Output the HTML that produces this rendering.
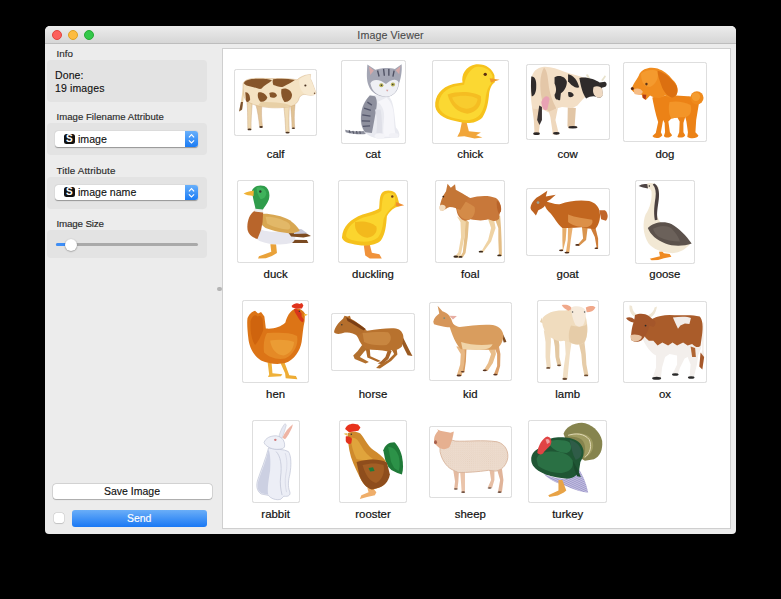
<!DOCTYPE html>
<html><head><meta charset="utf-8">
<style>
*{margin:0;padding:0;box-sizing:border-box}
html,body{width:781px;height:599px;background:#000;overflow:hidden;font-family:"Liberation Sans",sans-serif}
.abs{position:absolute}
#win{position:absolute;left:45px;top:26px;width:691px;height:508.3px;background:#ececec;border-radius:5px 5px 4px 4px;overflow:hidden}
#tb{position:absolute;left:0;top:0;width:691px;height:18px;background:linear-gradient(#ececec,#d6d6d6);border-bottom:1px solid #bdbdbd}
.dot{position:absolute;top:3.6px;width:10.5px;height:10.5px;border-radius:50%}
#title{position:absolute;left:0;top:3px;width:691px;text-align:center;font-size:10.7px;letter-spacing:0.1px;color:#4a4a4a;-webkit-text-stroke:0.1px #4a4a4a}
.lbl{position:absolute;font-size:9.8px;letter-spacing:0.05px;-webkit-text-stroke:0.15px #2a2a2a;color:#2a2a2a;white-space:nowrap}
.box{position:absolute;left:2px;width:159.5px;background:#e3e3e3;border-radius:4px}
.combo{position:absolute;left:8px;width:143px;height:15.5px;background:#fff;border-radius:3px;box-shadow:0 0.5px 1px rgba(0,0,0,.35)}
.combo .ic{position:absolute;left:9px;top:2.5px;width:10.5px;height:10px;background:#111;border-radius:2.5px;color:#fff;font-size:10px;font-weight:bold;text-align:center;line-height:10px}
.combo .tx{position:absolute;left:23px;top:1.5px;font-size:10.6px;color:#111;white-space:nowrap;-webkit-text-stroke:0.12px #111}
.combo .ar{position:absolute;right:0;top:0;width:13px;height:15.5px;background:linear-gradient(#68b0fb,#1b7cf5);border-radius:0 3px 3px 0}
#panel{position:absolute;left:177px;top:22px;width:509px;height:481px;background:#fff;border:1px solid #cfcfcf}
.cell{position:absolute}
.fr{position:absolute;background:#fff;border:1.6px solid #dedede;border-radius:2.5px;box-shadow:0 0 0.6px rgba(0,0,0,.12)}
.an{position:absolute;overflow:visible}
.cap{position:absolute;width:96px;text-align:center;font-size:11.4px;color:#111;-webkit-text-stroke:0.2px #111}
</style></head><body>
<div id="win">
  <div id="tb">
    <div class="dot" style="left:6.5px;background:#fc605c;border:0.5px solid #e0443e"></div>
    <div class="dot" style="left:22.5px;background:#fdbc40;border:0.5px solid #dea123"></div>
    <div class="dot" style="left:38.5px;background:#34c84a;border:0.5px solid #27aa35"></div>
    <div id="title">Image Viewer</div>
  </div>
  <!-- sidebar -->
  <div class="lbl" style="left:11.5px;top:21.5px">Info</div>
  <div class="box" style="top:34px;height:42px">
    <div class="abs" style="left:8px;top:9px;font-size:10.5px;line-height:13px;color:#111;letter-spacing:0.12px;-webkit-text-stroke:0.12px #111">Done:<br>19 images</div>
  </div>
  <div class="lbl" style="left:11.5px;top:85px;font-size:9.55px">Image Filename Attribute</div>
  <div class="box" style="top:97px;height:32px">
    <div class="combo" style="top:8px"><div class="ic">S</div><div class="tx">image</div><div class="ar"><svg width="13" height="15.5" viewBox="0 0 13 15.5" style="position:absolute;left:0;top:0"><path d="M3.9 6.3 L6.5 3.6 L9.1 6.3 M3.9 9.3 L6.5 12 L9.1 9.3" fill="none" stroke="#fff" stroke-width="1.1"/></svg></div></div>
  </div>
  <div class="lbl" style="left:11.5px;top:138.5px;letter-spacing:0.15px">Title Attribute</div>
  <div class="box" style="top:150.5px;height:32px">
    <div class="combo" style="top:8px"><div class="ic">S</div><div class="tx">image name</div><div class="ar"><svg width="13" height="15.5" viewBox="0 0 13 15.5" style="position:absolute;left:0;top:0"><path d="M3.9 6.3 L6.5 3.6 L9.1 6.3 M3.9 9.3 L6.5 12 L9.1 9.3" fill="none" stroke="#fff" stroke-width="1.1"/></svg></div></div>
  </div>
  <div class="lbl" style="left:11.5px;top:192px;letter-spacing:-0.17px">Image Size</div>
  <div class="box" style="top:204px;height:28px">
    <div class="abs" style="left:9px;top:13px;width:142px;height:2.5px;background:#a9a9a9;border-radius:2px"></div>
    <div class="abs" style="left:9px;top:13px;width:12px;height:2.5px;background:#3d8ef7;border-radius:2px"></div>
    <div class="abs" style="left:17.5px;top:8.5px;width:12px;height:12px;background:#fff;border-radius:50%;box-shadow:0 0.5px 1.5px rgba(0,0,0,.45)"></div>
  </div>
  <div class="abs" style="left:7.5px;top:457.5px;width:159px;height:15.2px;background:#fff;border-radius:3px;box-shadow:0 0 0 .5px rgba(0,0,0,.18),0 .5px 1px rgba(0,0,0,.2);font-size:10.5px;color:#111;text-align:center;line-height:15.2px;-webkit-text-stroke:0.15px #111">Save Image</div>
  <div class="abs" style="left:8.5px;top:486.5px;width:10.5px;height:10.5px;background:#fff;border-radius:2.5px;box-shadow:0 0 0 .5px rgba(0,0,0,.13),0 .5px 1px rgba(0,0,0,.12)"></div>
  <div class="abs" style="left:27px;top:484px;width:134.5px;height:16.5px;background:linear-gradient(#6aaef8,#1a78f4);border-radius:3px;font-size:10.4px;color:#fff;text-align:center;line-height:18px;-webkit-text-stroke:0.15px #fff">Send</div>
  <div class="abs" style="left:172px;top:260.5px;width:4.5px;height:4.5px;border-radius:50%;background:#b4b4b4"></div>
  <div id="panel"></div>
</div>
<div class="fr" style="left:233.9px;top:68.5px;width:83.4px;height:67.0px"></div>
<svg class="an" style="left:231px;top:57px" width="90" height="90" viewBox="0 0 599 599"><g stroke="none">
<path d="M82,185 C75,230 70,280 64,312 L54,362 L72,352 L80,312 C86,270 88,230 92,190 Z" fill="#eed8b0"/>
<path d="M66,300 L54,362 L74,350 L80,300 Z" fill="#7d5430"/>
<path d="M104,285 C112,330 110,400 112,478 L134,482 C132,420 138,350 142,300 Z" fill="#ecd6ae" stroke="#c9a47a" stroke-width="3"/>
<path d="M165,315 C178,360 186,420 190,462 L210,466 C204,420 200,360 206,322 Z" fill="#e2c59a" stroke="#c9a47a" stroke-width="3"/>
<path d="M350,315 C358,380 362,440 364,497 L388,503 C384,440 384,380 390,318 Z" fill="#f0dcb6" stroke="#c9a47a" stroke-width="3"/>
<path d="M396,318 C402,380 406,430 406,470 L424,474 C421,430 419,380 426,318 Z" fill="#e0c294" stroke="#c9a47a" stroke-width="3"/>
<path d="M80,180 C85,150 130,140 200,142 C280,145 380,140 440,152 C455,135 490,120 515,118 L530,116 L526,142 C540,160 555,215 566,238 C562,256 530,258 500,250 C480,245 465,255 455,270 C448,300 430,320 400,328 C350,340 260,345 180,325 C140,315 110,300 95,285 C85,260 78,220 80,180 Z" fill="#f4e2c2" stroke="#cfa97c" stroke-width="3"/>
<path d="M180,322 C260,342 350,338 400,326 C380,310 300,300 200,300 Z" fill="#e8d0a6"/>
<path d="M455,150 C480,125 515,118 530,116 L526,142 C540,165 555,215 566,238 C562,256 530,258 500,250 C470,240 450,200 455,150 Z" fill="#f7e9d0"/>
<path d="M85,175 C95,150 140,142 200,145 C240,146 262,150 272,156 C252,175 222,185 202,212 C180,216 160,200 130,196 C110,192 95,190 85,175 Z" fill="#86552a"/>
<path d="M280,148 C330,143 380,145 425,153 C405,170 372,182 350,196 C330,206 302,192 282,186 C276,170 276,156 280,148 Z" fill="#86552a"/>
<path d="M180,238 C200,228 232,245 242,270 C236,292 214,302 194,296 C180,280 175,260 180,238 Z" fill="#86552a"/>
<path d="M255,240 C272,228 302,235 306,256 C300,272 276,276 260,266 Z" fill="#86552a"/>
<path d="M335,215 C360,200 402,215 406,252 C406,282 382,302 356,300 C340,280 330,250 335,215 Z" fill="#86552a"/>
<path d="M95,235 C112,230 127,252 127,282 C122,302 105,306 100,292 Z" fill="#86552a"/>
<ellipse cx="123" cy="482" rx="13" ry="6" fill="#4a3322"/>
<ellipse cx="200" cy="466" rx="12" ry="6" fill="#4a3322"/>
<ellipse cx="376" cy="503" rx="14" ry="6" fill="#4a3322"/>
<ellipse cx="415" cy="474" rx="11" ry="5" fill="#4a3322"/>
<circle cx="495" cy="190" r="7" fill="#4a3322"/>
<circle cx="556" cy="242" r="5" fill="#6b4a33"/>
</g>
</svg>
<div class="cap" style="left:227.6px;top:148.0px">calf</div>
<div class="fr" style="left:340.5px;top:60.0px;width:65.0px;height:83.9px"></div>
<svg class="an" style="left:328px;top:57px" width="90" height="90" viewBox="0 0 599 599"><g stroke="none">
<path d="M240,492 C200,498 150,494 114,484 L118,500 C160,512 210,516 252,512 Z" fill="#8d8f9c"/>
<path d="M140,488 l8,18 M165,492 l6,18 M190,494 l4,18 M212,494 l3,18" stroke="#4f5160" stroke-width="7"/>
<path d="M282,252 C250,282 226,322 219,380 C213,430 220,470 242,500 L272,522 C300,540 340,546 380,541 L470,536 C482,520 472,490 452,470 C446,420 442,360 432,320 C426,290 412,270 402,262 Z" fill="#e9eaf0"/>
<path d="M278,256 C246,290 226,330 221,380 C216,430 223,470 246,500 L292,506 C302,460 312,400 322,340 C330,300 322,270 312,262 Z" fill="#8e909e"/>
<path d="M262,300 l30,20 M240,340 l45,15 M228,385 l55,8 M225,425 l55,2 M232,462 l48,-4" stroke="#53556a" stroke-width="9" fill="none"/>
<path d="M330,300 C360,320 380,360 372,420 C368,470 365,500 372,530 C400,532 430,530 450,522 C440,470 440,420 436,370 C430,320 410,290 390,270 Z" fill="#f6f6fa"/>
<path d="M312,350 C330,400 328,460 322,505 L360,510 C360,460 360,400 350,350 Z" fill="#dfe0e8"/>
<ellipse cx="345" cy="526" rx="36" ry="18" fill="#f4f4f8"/>
<ellipse cx="437" cy="522" rx="32" ry="16" fill="#f1f1f6"/>
<path d="M270,190 C255,150 258,110 262,50 L315,85 C360,70 410,70 445,80 L490,48 C495,100 482,150 472,180 C466,230 432,266 386,266 C332,263 286,236 270,190 Z" fill="#a4a6b4"/>
<path d="M272,62 L305,90 L282,120 Z" fill="#d6a9a9"/>
<path d="M482,60 L450,88 L474,115 Z" fill="#d6a9a9"/>
<path d="M330,90 l10,40 M370,80 l5,45 M405,80 l0,45 M440,90 l-8,40 M290,175 l40,0" stroke="#4e5062" stroke-width="9" fill="none"/>
<path d="M282,175 C300,140 350,150 386,180 C420,148 460,142 470,170 C466,232 430,264 386,264 C332,262 292,232 282,175 Z" fill="#eff0f5"/>
<circle cx="355" cy="188" r="14" fill="#b9b35a"/>
<circle cx="432" cy="183" r="14" fill="#b9b35a"/>
<circle cx="356" cy="188" r="5" fill="#333"/>
<circle cx="431" cy="183" r="5" fill="#333"/>
<path d="M386,218 L402,218 L394,232 Z" fill="#d89a9a"/>
</g>
</svg>
<div class="cap" style="left:325.0px;top:148.0px">cat</div>
<div class="fr" style="left:431.6px;top:60.0px;width:77.5px;height:83.9px"></div>
<svg class="an" style="left:425px;top:57px" width="90" height="90" viewBox="0 0 599 599"><g stroke="none">
<path d="M248,420 L232,498 L215,530 L262,528 L330,542 L382,536 L340,520 L372,502 L292,494 L275,428 Z" fill="#f1a63a"/>
<path d="M68,330 C63,260 108,200 188,180 L250,170 C240,120 270,58 340,48 C402,43 447,75 462,122 L465,168 C442,182 432,212 427,242 C422,300 412,360 382,402 C342,442 282,447 230,432 C150,422 78,392 68,330 Z" fill="#f6c21c"/>
<path d="M90,320 C95,250 140,210 200,195 L260,185 C270,130 300,75 345,65 C400,60 440,90 450,130 L440,175 C420,200 410,230 405,260 C400,320 385,370 355,395 C320,425 270,425 230,415 C160,405 95,375 90,320 Z" fill="#fbd832"/>
<path d="M150,250 C230,222 332,232 372,262 C382,322 342,372 282,377 C222,372 172,332 150,250 Z" fill="#f5bd22"/>
<path d="M180,270 C240,250 320,258 350,280 C345,320 315,345 275,345 C230,340 195,310 180,270 Z" fill="#f8cc2e"/>
<path d="M430,142 L497,152 L438,170 Z" fill="#ef9a2a"/>
<circle cx="401" cy="115" r="11" fill="#5a2e10"/>
</g>
</svg>
<div class="cap" style="left:422.3px;top:148.0px">chick</div>
<div class="fr" style="left:525.8px;top:64.0px;width:83.9px;height:76.0px"></div>
<svg class="an" style="left:523px;top:57px" width="90" height="90" viewBox="0 0 599 599"><g stroke="none">
<path d="M60,330 L72,420 L76,495 L70,515 L112,515 L106,495 L116,420 L122,335 Z" fill="#ecd3b6"/>
<path d="M170,360 L182,400 L196,495 L196,515 L242,515 L234,495 L216,420 L232,340 Z" fill="#efd8bd"/>
<path d="M298,335 L296,460 L304,476 L366,470 L344,456 L352,340 Z" fill="#e2c6a6"/>
<path d="M55,150 C60,100 90,70 140,65 C180,62 230,80 280,100 C330,115 380,130 420,140 C450,150 470,170 480,190 L440,245 C405,270 382,300 362,322 L330,340 L260,332 L222,342 L170,370 L140,352 L62,342 C50,280 50,200 55,150 Z" fill="#f3dfc6"/>
<path d="M140,70 C110,120 110,200 125,280 C130,320 150,350 175,365 L222,342 C200,300 175,240 170,180 C165,130 160,90 140,70 Z" fill="#e4c7a8"/>
<path d="M418,118 L436,150 L448,145 L432,115 Z" fill="#e8e2cc"/>
<path d="M545,122 L520,155 L532,160 L552,130 Z" fill="#e8e2cc"/>
<path d="M375,140 C420,128 480,150 510,170 L545,165 C560,172 560,190 548,198 L525,205 L530,250 C526,272 505,276 490,266 C470,258 446,262 420,276 C400,250 385,200 375,140 Z" fill="#2f2b2b"/>
<path d="M470,200 C490,190 520,195 528,215 L532,250 C526,272 505,276 488,266 C470,255 460,230 470,200 Z" fill="#efd9c2"/>
<path d="M55,130 C75,125 92,150 88,200 C88,240 72,262 58,262 C52,220 52,170 55,130 Z" fill="#2f2b2b"/>
<path d="M210,135 C240,115 285,130 292,165 C292,200 272,230 252,242 L247,287 C232,292 210,282 210,252 C225,232 222,202 210,177 Z" fill="#2f2b2b"/>
<path d="M300,115 C332,120 362,152 374,202 C352,212 322,192 300,162 Z" fill="#2f2b2b"/>
<path d="M300,235 C315,228 335,238 338,255 C330,268 312,272 302,262 Z" fill="#2f2b2b"/>
<path d="M122,300 C137,258 167,250 177,280 L162,347 C147,362 127,352 122,300 Z" fill="#e8a2b4"/>
<path d="M108,322 L94,420 L110,452 L126,420 L126,332 Z" fill="#3a3333"/>
<ellipse cx="90" cy="510" rx="22" ry="9" fill="#2a2626"/>
<ellipse cx="222" cy="508" rx="22" ry="9" fill="#2a2626"/>
<ellipse cx="332" cy="468" rx="30" ry="8" fill="#2a2626"/>
</g>
</svg>
<div class="cap" style="left:519.7px;top:148.0px">cow</div>
<div class="fr" style="left:622.8px;top:61.9px;width:84.3px;height:80.2px"></div>
<svg class="an" style="left:620px;top:57px" width="90" height="90" viewBox="0 0 599 599"><g stroke="none">
<path d="M215,270 C240,258 300,262 370,256 L450,262 C470,262 505,270 527,300 L517,360 L507,420 L502,500 L522,522 C517,542 472,546 448,532 L452,500 L442,430 L434,400 L422,440 L422,500 L434,520 C422,540 392,540 382,530 L394,500 L397,430 L382,402 L342,410 L322,430 L332,500 L347,520 C332,540 302,540 292,525 L300,500 L297,440 L287,420 L272,500 L282,520 C264,546 224,542 216,526 L238,506 L254,432 C244,402 230,352 215,270 Z" fill="#ec8216"/>
<path d="M330,300 C380,290 430,300 470,320 C480,360 470,390 440,400 L382,402 L342,410 C322,380 322,330 330,300 Z" fill="#f39528"/>
<circle cx="512" cy="272" r="44" fill="#ef8a1c"/>
<circle cx="505" cy="265" r="28" fill="#f49c30"/>
<path d="M78,212 C90,172 120,142 130,112 C150,77 200,62 250,77 C290,92 320,112 350,152 C385,182 395,232 370,262 C350,277 320,272 300,257 L270,272 C240,277 220,267 200,257 L172,287 L150,272 L145,252 C120,252 95,242 78,222 Z" fill="#f08c1e"/>
<path d="M140,110 C170,85 220,80 250,95 C260,140 240,180 200,200 C170,200 140,180 140,110 Z" fill="#f49a2e"/>
<path d="M250,92 C300,102 350,152 376,192 C392,232 376,267 346,272 C316,262 290,232 276,192 C262,152 250,122 250,92 Z" fill="#dc7010"/>
<path d="M92,216 C112,204 142,210 152,232 C146,252 120,256 96,246 Z" fill="#f6bd86"/>
<path d="M150,250 L175,252 L170,285 L152,272 Z" fill="#b03a18"/>
<circle cx="82" cy="210" r="10" fill="#5a2a10"/>
<ellipse cx="176" cy="180" rx="8" ry="9" fill="#5c3418"/>
</g>
</svg>
<div class="cap" style="left:616.9px;top:148.0px">dog</div>
<div class="fr" style="left:236.7px;top:180.2px;width:77.8px;height:83.1px"></div>
<svg class="an" style="left:231px;top:177px" width="90" height="90" viewBox="0 0 599 599"><g stroke="none">
<path d="M262,448 L268,498 L186,528 L180,542 L232,540 L272,526 L306,506 L300,448 Z" fill="#e9a23a"/>
<path d="M396,418 L505,420 L515,440 L410,440 Z" fill="#7a4a22"/>
<path d="M175,338 C200,358 260,368 320,363 L400,358 C432,378 442,420 402,440 C352,456 252,452 190,426 C160,410 150,380 175,338 Z" fill="#e6e6ee"/>
<path d="M380,368 L470,358 L532,392 L482,402 L400,396 Z" fill="#7d4b20"/>
<path d="M398,338 L470,348 L510,376 L420,380 Z" fill="#c7c8d8"/>
<path d="M188,248 C230,238 330,253 392,288 C432,318 452,343 457,360 L412,375 C352,376 282,360 230,340 C200,320 184,290 188,248 Z" fill="#d8a752"/>
<path d="M230,265 C280,262 340,280 380,305 C400,325 400,345 380,350 C320,345 270,330 240,310 Z" fill="#e2b868"/>
<path d="M156,224 C120,250 104,300 110,350 C115,382 140,402 176,412 L200,352 L210,300 L214,234 Z" fill="#b8652b"/>
<path d="M158,204 L216,208 L212,236 L156,230 Z" fill="#ececec"/>
<path d="M140,90 C150,60 190,50 222,60 C252,75 262,110 252,150 C242,180 222,200 212,216 L163,212 C158,185 150,160 145,130 Z" fill="#2f9c4b"/>
<path d="M170,70 C200,62 230,75 235,110 C230,140 210,150 195,145 C180,120 170,100 170,70 Z" fill="#3fb35b"/>
<path d="M84,110 C110,98 130,94 152,90 L150,126 C120,124 100,120 84,110 Z" fill="#f0b236"/>
<circle cx="195" cy="96" r="8" fill="#2a3a2a"/>
</g>
</svg>
<div class="cap" style="left:227.6px;top:267.8px">duck</div>
<div class="fr" style="left:337.9px;top:180.2px;width:70.1px;height:83.1px"></div>
<svg class="an" style="left:328px;top:177px" width="90" height="90" viewBox="0 0 599 599"><g stroke="none">
<path d="M238,455 L248,522 L278,542 L358,542 L342,514 L292,504 L278,450 Z" fill="#f0923a"/>
<path d="M93,402 C98,330 150,280 230,250 C280,235 320,225 340,210 C345,170 340,130 360,104 C380,86 422,86 447,104 C462,120 467,150 472,170 L470,196 C442,202 412,222 392,262 C387,322 382,382 352,422 C322,452 262,462 200,452 C140,442 98,432 93,402 Z" fill="#f5c11c"/>
<path d="M120,390 C130,330 170,295 235,270 C290,255 335,245 355,225 C360,180 360,140 375,118 C395,102 425,104 440,120 C450,140 450,170 440,190 C410,215 385,240 370,280 C365,330 355,380 330,405 C300,430 250,435 200,428 C150,420 122,410 120,390 Z" fill="#fbd52e"/>
<path d="M180,300 C230,290 290,300 322,330 C332,370 302,400 262,405 C212,400 172,360 180,300 Z" fill="#f3b91c"/>
<path d="M455,166 L507,188 L470,197 L450,192 Z" fill="#ef8e30"/>
<circle cx="428" cy="130" r="8" fill="#6a3a1a"/>
</g>
</svg>
<div class="cap" style="left:325.0px;top:267.8px">duckling</div>
<div class="fr" style="left:435.4px;top:180.2px;width:69.8px;height:83.1px"></div>
<svg class="an" style="left:425px;top:177px" width="90" height="90" viewBox="0 0 599 599"><g stroke="none">
<path d="M458,262 L488,340 L488,420 L492,518 L478,524 L512,526 L510,430 L506,340 L500,258 Z" fill="#e4be86"/>
<path d="M418,276 L440,340 L420,420 L380,488 L358,496 L386,502 L440,430 L470,340 L458,276 Z" fill="#efd3a4"/>
<path d="M250,270 L262,310 L262,400 L252,500 L240,520 L222,524 L252,534 L270,505 L285,400 L292,300 Z" fill="#e4bf88"/>
<path d="M212,262 L236,300 L240,400 L222,500 L205,522 L190,526 L222,540 L240,510 L262,400 L272,300 Z" fill="#f0d4a6"/>
<path d="M150,85 C200,100 262,120 302,140 C352,125 422,118 472,140 C502,160 512,200 497,240 L492,280 C472,300 442,292 422,282 C392,292 352,292 302,282 L272,292 C242,292 216,262 210,222 C200,182 180,132 150,85 Z" fill="#c8783a"/>
<path d="M220,140 C260,160 300,175 330,200 C340,240 320,275 290,285 C250,285 225,260 215,220 Z" fill="#d48b48"/>
<path d="M478,158 C500,170 512,200 505,230 L492,248 C480,220 475,190 478,158 Z" fill="#b8642a"/>
<path d="M98,205 C100,170 115,130 140,95 L150,45 L172,72 L200,48 L205,85 C232,100 262,115 290,135 L235,220 C215,210 190,200 165,200 C145,205 130,220 115,225 C104,222 97,215 98,205 Z" fill="#c47636"/>
<path d="M96,195 C108,180 130,182 138,200 C138,220 120,230 104,226 C95,218 94,205 96,195 Z" fill="#f3ddc0"/>
<circle cx="122" cy="130" r="6" fill="#3a2010"/>
<ellipse cx="205" cy="530" rx="16" ry="7" fill="#3a2818"/>
<ellipse cx="236" cy="532" rx="14" ry="6" fill="#3a2818"/>
<ellipse cx="372" cy="497" rx="15" ry="6" fill="#3a2818"/>
<ellipse cx="495" cy="522" rx="14" ry="6" fill="#3a2818"/>
</g>
</svg>
<div class="cap" style="left:422.3px;top:267.8px">foal</div>
<div class="fr" style="left:525.8px;top:187.9px;width:83.9px;height:67.8px"></div>
<svg class="an" style="left:523px;top:177px" width="90" height="90" viewBox="0 0 599 599"><g stroke="none">
<path d="M440,320 L478,400 L490,470 L476,476 L500,478 L500,410 L480,330 Z" fill="#cf7d38"/>
<path d="M392,330 L400,410 L368,446 L348,452 L376,458 L420,420 L430,340 Z" fill="#d9944e"/>
<path d="M262,330 L262,420 L264,480 L244,490 L266,492 L284,420 L290,340 Z" fill="#e6ac6a"/>
<path d="M300,330 L298,420 L286,500 L278,506 L308,506 L318,420 L330,340 Z" fill="#eab070"/>
<path d="M140,160 C180,170 220,186 250,180 C300,160 380,150 440,160 C482,170 506,200 510,232 C520,280 500,330 480,346 C450,345 420,340 390,334 C360,336 330,340 300,340 L262,340 C232,320 205,262 172,232 C150,212 140,182 140,160 Z" fill="#c2661f"/>
<path d="M300,250 C350,270 410,275 460,285 C470,310 450,330 420,335 C370,335 320,320 300,300 Z" fill="#dc9048"/>
<path d="M508,222 L545,222 C566,240 570,272 552,292 L520,282 Z" fill="#c0652a"/>
<path d="M50,205 C55,170 80,140 112,125 L162,92 L152,130 L218,118 L182,150 L162,162 C152,192 132,212 102,222 L86,256 L70,236 C60,226 50,216 50,205 Z" fill="#bd6220"/>
<circle cx="100" cy="170" r="9" fill="#9aa49a"/>
<ellipse cx="254" cy="488" rx="14" ry="6" fill="#4a2a18"/>
<ellipse cx="292" cy="503" rx="16" ry="6" fill="#4a2a18"/>
<ellipse cx="362" cy="452" rx="14" ry="6" fill="#4a2a18"/>
<ellipse cx="488" cy="474" rx="12" ry="5" fill="#4a2a18"/>
</g>
</svg>
<div class="cap" style="left:519.7px;top:267.8px">goat</div>
<div class="fr" style="left:635.0px;top:180.0px;width:59.8px;height:83.7px"></div>
<svg class="an" style="left:620px;top:177px" width="90" height="90" viewBox="0 0 599 599"><g stroke="none">
<path d="M260,498 L266,528 L198,544 L210,554 L254,552 L292,540 L342,530 L330,512 L292,508 L282,496 Z" fill="#ef8a22"/>
<path d="M175,46 C200,34 242,40 257,70 C262,120 244,180 244,250 C254,280 264,300 284,312 C340,330 410,380 472,440 C440,480 400,505 350,507 C280,502 220,480 190,442 C150,382 150,300 170,250 C200,205 214,150 210,96 C205,80 190,75 180,72 Z" fill="#f2e8d4"/>
<path d="M228,44 C256,58 264,100 258,150 C252,200 242,240 250,285 L232,288 C222,232 230,180 236,140 C242,100 236,70 218,50 Z" fill="#4a4040"/>
<path d="M185,340 C222,300 292,290 342,312 C392,340 442,390 477,442 C422,462 352,462 302,442 C242,422 202,382 185,340 Z" fill="#5c524c"/>
<path d="M220,345 C260,320 310,320 340,340 C370,370 390,400 400,430 C350,430 300,420 260,400 C240,385 225,365 220,345 Z" fill="#6b615a"/>
<path d="M124,60 C140,48 160,44 182,48 L186,76 C166,73 140,68 124,60 Z" fill="#4e4444"/>
<circle cx="195" cy="60" r="5" fill="#222"/>
</g>
</svg>
<div class="cap" style="left:616.9px;top:267.8px">goose</div>
<div class="fr" style="left:241.9px;top:300.2px;width:67.5px;height:83.1px"></div>
<svg class="an" style="left:231px;top:297px" width="90" height="90" viewBox="0 0 599 599"><g stroke="none">
<path d="M244,436 L254,516 L246,532 L332,528 L342,514 L276,508 L270,436 Z" fill="#efb13a"/>
<path d="M328,436 L360,508 L364,540 L442,548 L432,526 L388,520 L356,436 Z" fill="#eeac34"/>
<path d="M110,140 C130,100 150,95 160,92 L180,110 L200,100 L222,130 L232,210 C282,215 332,200 362,170 C372,130 392,95 422,80 C452,70 477,85 492,110 L490,160 C480,200 476,260 470,300 C460,360 420,420 360,440 C300,452 250,442 200,422 C150,392 120,332 115,272 C110,222 105,172 110,140 Z" fill="#dc7416"/>
<path d="M130,160 C145,120 165,115 175,130 L195,125 L210,145 L215,220 C200,260 180,300 160,320 C140,290 130,240 130,200 Z" fill="#cf640e"/>
<path d="M240,240 C300,240 380,230 440,260 C450,320 420,380 360,410 C300,420 250,400 220,370 C215,320 220,270 240,240 Z" fill="#e58a26"/>
<path d="M260,290 C320,280 380,285 420,300 C415,350 390,380 350,390 C300,385 270,350 260,290 Z" fill="#eb9c34"/>
<path d="M404,58 C420,42 440,36 456,46 L472,40 L482,56 L472,76 L432,78 L406,68 Z" fill="#e0331c"/>
<path d="M420,80 C440,78 460,90 470,110 L470,130 L485,150 L480,168 C460,165 450,140 440,125 C430,110 420,95 420,80 Z" fill="#d8361a"/>
<path d="M484,110 L512,118 L486,128 Z" fill="#f0b030"/>
<circle cx="455" cy="95" r="5" fill="#333"/>
</g>
</svg>
<div class="cap" style="left:227.6px;top:387.8px">hen</div>
<div class="fr" style="left:330.8px;top:313.1px;width:84.4px;height:57.5px"></div>
<svg class="an" style="left:328px;top:297px" width="90" height="90" viewBox="0 0 599 599"><g stroke="none">
<path d="M488,248 C512,290 532,340 562,392 L530,388 C510,352 494,312 478,282 Z" fill="#9a5a22"/>
<path d="M250,338 L262,402 L332,432 L352,426 L282,394 L278,342 Z" fill="#b06a28"/>
<path d="M402,344 L382,400 L352,430 L330,442 L362,448 L402,412 L424,360 Z" fill="#a8642a"/>
<path d="M228,318 L198,360 L168,390 L178,412 L250,442 L272,432 L212,400 L242,362 L262,346 Z" fill="#b2702e"/>
<path d="M418,338 L440,380 L400,420 L340,452 L320,472 L346,476 L420,426 L462,382 L456,338 Z" fill="#b06c2a"/>
<path d="M150,150 C200,190 230,215 262,225 C332,215 402,205 452,210 C482,215 502,240 502,270 L492,330 C472,350 442,362 420,352 L400,362 C350,352 300,352 260,347 C230,332 210,302 200,272 C180,242 160,202 150,150 Z" fill="#b8722e"/>
<path d="M230,240 C280,235 340,230 400,235 C430,260 420,300 390,320 C330,325 280,320 240,300 Z" fill="#c88640"/>
<path d="M40,235 C45,200 70,170 100,145 L110,124 L130,130 L146,124 L152,145 C182,160 222,190 252,215 L202,262 C172,242 142,232 112,237 C82,247 55,252 40,235 Z" fill="#b46e2c"/>
<path d="M120,134 C160,150 212,180 252,215 L236,222 C202,202 160,176 130,160 Z" fill="#7a3e14"/>
<circle cx="92" cy="185" r="5" fill="#333"/>
</g>
</svg>
<div class="cap" style="left:325.0px;top:387.8px">horse</div>
<div class="fr" style="left:428.8px;top:302.2px;width:83.1px;height:79.3px"></div>
<svg class="an" style="left:425px;top:297px" width="90" height="90" viewBox="0 0 599 599"><g stroke="none">
<path d="M460,330 L480,380 L480,460 L458,515 L482,520 L500,460 L502,380 L492,330 Z" fill="#dca06a"/>
<path d="M418,340 L440,380 L420,440 L392,486 L416,492 L452,440 L472,380 L466,340 Z" fill="#e9bd8a"/>
<path d="M240,340 L250,400 L250,480 L238,500 L262,502 L272,430 L276,345 Z" fill="#d89c62"/>
<path d="M208,330 L238,380 L234,450 L212,520 L244,526 L260,450 L266,380 L262,330 Z" fill="#e8b884"/>
<path d="M512,238 C526,258 536,280 542,300 L524,302 C518,282 514,262 508,250 Z" fill="#7a4a22"/>
<path d="M150,150 C180,170 200,196 232,200 C300,190 382,180 452,186 C502,196 524,232 522,262 C517,300 502,330 472,350 C422,352 362,352 302,347 L240,347 C210,322 180,262 150,150 Z" fill="#d99d5e"/>
<path d="M240,300 C300,320 380,325 450,315 C440,340 410,352 360,352 L250,348 Z" fill="#f0d4a8"/>
<path d="M55,165 C60,140 80,120 95,110 L84,58 L116,95 C132,100 152,110 162,125 L176,150 C182,170 192,190 202,202 L150,202 C120,197 90,192 60,182 Z" fill="#d6965a"/>
<path d="M162,124 L212,126 L186,150 Z" fill="#e7ada2"/>
<circle cx="128" cy="140" r="6" fill="#7a8a7a"/>
<ellipse cx="226" cy="522" rx="16" ry="7" fill="#5a3420"/>
<ellipse cx="250" cy="498" rx="12" ry="5" fill="#5a3420"/>
<ellipse cx="398" cy="488" rx="14" ry="6" fill="#5a3420"/>
<ellipse cx="468" cy="516" rx="14" ry="6" fill="#5a3420"/>
</g>
</svg>
<div class="cap" style="left:422.3px;top:387.8px">kid</div>
<div class="fr" style="left:536.5px;top:300.2px;width:62.4px;height:83.1px"></div>
<svg class="an" style="left:523px;top:297px" width="90" height="90" viewBox="0 0 599 599"><g stroke="none">
<path d="M200,262 L212,330 L216,400 L228,452 L256,456 L242,400 L242,320 L234,262 Z" fill="#e3c8a2"/>
<path d="M138,222 L150,300 L150,400 L158,470 L186,472 L180,400 L186,300 L184,236 Z" fill="#efdcc0"/>
<path d="M368,292 L388,380 L394,450 L408,522 L436,522 L422,450 L418,380 L408,292 Z" fill="#e6cca8"/>
<path d="M278,282 L284,380 L270,480 L264,546 L296,546 L302,480 L312,380 L324,296 Z" fill="#f1dfc4"/>
<path d="M125,138 L113,166 L137,176 Z" fill="#e8d2b0"/>
<path d="M130,140 C160,100 220,85 280,90 L330,80 C380,70 412,100 422,150 C432,200 432,260 412,300 C392,322 352,322 312,302 L272,292 C232,302 202,282 172,262 C142,232 120,182 130,140 Z" fill="#f0dcbe"/>
<path d="M320,190 C360,200 410,200 425,180 C432,230 425,280 405,305 C380,320 340,320 310,300 C300,260 305,220 320,190 Z" fill="#e6cca8"/>
<path d="M258,54 C290,44 322,60 327,80 L302,92 C282,82 265,72 258,54 Z" fill="#f0a88a"/>
<path d="M418,70 C450,54 476,58 482,70 C472,92 450,102 424,102 Z" fill="#f0a88a"/>
<path d="M320,70 C350,55 400,60 416,90 C422,130 412,170 397,192 C377,202 357,197 347,182 C332,152 322,112 320,70 Z" fill="#f6eadb"/>
<circle cx="330" cy="100" r="5" fill="#555"/>
<circle cx="410" cy="100" r="5" fill="#555"/>
<ellipse cx="168" cy="472" rx="14" ry="6" fill="#6a4a30"/>
<ellipse cx="240" cy="455" rx="13" ry="6" fill="#6a4a30"/>
<ellipse cx="278" cy="545" rx="16" ry="7" fill="#6a4a30"/>
<ellipse cx="420" cy="522" rx="14" ry="6" fill="#6a4a30"/>
</g>
</svg>
<div class="cap" style="left:519.7px;top:387.8px">lamb</div>
<div class="fr" style="left:623.0px;top:300.7px;width:83.8px;height:82.3px"></div>
<svg class="an" style="left:620px;top:297px" width="90" height="90" viewBox="0 0 599 599"><g stroke="none">
<path d="M544,170 L548,350 L536,400 L528,462 L548,482 L560,400 L556,350 L556,170 Z" fill="#f2ebe6"/>
<path d="M536,370 L528,462 L548,482 L560,400 Z" fill="#a6582a"/>
<path d="M150,230 C170,150 250,120 330,120 C420,125 480,115 530,130 C550,150 555,200 545,260 L540,340 L520,390 L512,450 L492,530 L462,540 L470,450 L450,400 L430,410 L400,470 L382,520 L346,520 L380,450 L380,390 L330,380 L300,400 L280,470 L272,540 L216,540 L240,470 L240,390 C200,370 170,320 150,280 Z" fill="#f3efec"/>
<path d="M150,230 C170,150 250,120 330,120 C420,125 480,115 530,130 C550,150 555,200 545,260 L536,322 C522,342 500,332 480,312 L450,322 L420,302 L380,322 L350,302 L320,322 L282,302 L250,322 L222,292 L192,292 L170,272 Z" fill="#aa5c2a"/>
<path d="M470,330 L500,340 L505,400 L480,400 Z" fill="#b06634"/>
<path d="M352,136 C402,130 452,130 472,140 L462,180 L432,176 L402,190 L386,212 L372,182 Z" fill="#f2ece8"/>
<path d="M64,55 C58,90 74,120 100,132 L112,116 C92,106 82,86 80,60 Z" fill="#efe6d4"/>
<path d="M246,64 C240,100 226,130 196,140 L190,120 C210,110 226,95 230,70 Z" fill="#efe6d4"/>
<path d="M40,140 C60,130 80,135 95,150 L100,120 C130,105 170,110 190,125 L220,150 C240,160 245,180 222,200 L196,190 C186,230 166,270 142,290 C122,302 90,302 75,287 C70,250 80,200 90,170 C70,165 50,160 40,140 Z" fill="#a4562a"/>
<path d="M70,255 C90,245 130,250 146,265 C141,290 111,302 81,292 C70,282 68,265 70,255 Z" fill="#e7c3a2"/>
<circle cx="170" cy="190" r="6" fill="#2a2a2a"/>
<ellipse cx="244" cy="540" rx="30" ry="10" fill="#2a2a2a"/>
<ellipse cx="368" cy="516" rx="22" ry="8" fill="#2a2a2a"/>
<ellipse cx="474" cy="536" rx="22" ry="8" fill="#2a2a2a"/>
</g>
</svg>
<div class="cap" style="left:616.9px;top:387.8px">ox</div>
<div class="fr" style="left:251.6px;top:420.2px;width:48.1px;height:83.1px"></div>
<svg class="an" style="left:231px;top:417px" width="90" height="90" viewBox="0 0 599 599"><g stroke="none">
<path d="M318,132 C328,92 344,60 360,44 L368,54 C358,90 348,122 338,142 Z" fill="#e6e8f2" stroke="#b8bccc" stroke-width="3"/>
<path d="M342,138 C358,100 384,70 412,48 L406,72 C392,102 376,132 360,148 Z" fill="#eeb4a4"/>
<path d="M250,205 C300,220 350,210 382,230 C402,260 402,320 392,380 C382,420 376,460 392,500 C397,520 382,532 352,527 L332,547 C302,557 262,542 250,522 L200,512 C170,492 165,452 180,412 C200,352 230,282 250,205 Z" fill="#eceef6" stroke="#b6bace" stroke-width="4"/>
<path d="M250,215 C235,290 207,350 187,410 C170,455 174,490 202,508 L248,518 C240,480 250,420 260,360 C265,300 262,250 250,215 Z" fill="#ccd0e2"/>
<path d="M300,230 C330,260 340,320 330,400 C325,440 330,480 340,520" stroke="#b4b8cc" stroke-width="4" fill="none"/>
<path d="M360,240 C375,280 375,330 365,380 C358,420 360,460 370,500" stroke="#c4c8d8" stroke-width="3" fill="none"/>
<path d="M220,170 C230,140 260,125 300,125 C340,130 362,160 356,200 C346,216 300,222 260,206 C240,196 226,186 220,170 Z" fill="#eef0f7" stroke="#b6bace" stroke-width="4"/>
<circle cx="295" cy="152" r="8" fill="#d07a7a"/>
</g>
</svg>
<div class="cap" style="left:227.6px;top:507.8px">rabbit</div>
<div class="fr" style="left:338.8px;top:420.2px;width:68.5px;height:83.1px"></div>
<svg class="an" style="left:328px;top:417px" width="90" height="90" viewBox="0 0 599 599"><g stroke="none">
<path d="M262,472 L270,500 L222,520 L212,546 L260,532 L312,520 L322,500 L302,476 Z" fill="#efae6a"/>
<path d="M368,222 C378,190 400,168 442,168 C462,185 482,220 492,262 C502,312 502,352 492,382 L462,372 L422,352 L402,332 L382,292 Z" fill="#1f7a38"/>
<path d="M400,200 C430,195 455,220 470,260 C480,300 478,340 470,360 L440,340 L420,300 Z" fill="#2c9248"/>
<path d="M130,110 C150,95 190,95 215,110 C242,140 262,190 302,220 C332,240 362,260 382,290 L392,380 C402,420 382,460 332,472 L302,482 C262,482 232,442 212,402 C182,342 152,282 142,222 C136,182 130,140 130,110 Z" fill="#cf8a2c"/>
<path d="M150,140 C180,130 200,150 220,190 C240,230 270,260 300,280 C260,290 220,290 190,280 C170,240 155,190 150,140 Z" fill="#e0a43c"/>
<path d="M190,300 C250,282 332,272 392,302 L412,382 C402,432 372,462 332,472 L292,482 C252,472 226,432 210,392 Z" fill="#8e4d1c"/>
<path d="M230,320 C280,305 330,305 370,320 C380,370 360,420 320,440 C280,430 250,390 230,320 Z" fill="#a35e24"/>
<path d="M270,340 L300,335 L310,360 L280,362 Z" fill="#1f7a38"/>
<path d="M114,80 C120,60 140,45 170,45 L200,50 L216,70 L202,92 L170,97 L140,102 Z" fill="#e8321c"/>
<path d="M118,130 C130,125 150,130 160,145 L155,175 C140,185 122,175 118,160 Z" fill="#e2321c"/>
<path d="M104,112 L125,106 L128,124 Z" fill="#e8c050"/>
<circle cx="155" cy="115" r="5" fill="#333"/>
</g>
</svg>
<div class="cap" style="left:325.0px;top:507.8px">rooster</div>
<div class="fr" style="left:428.8px;top:425.9px;width:83.1px;height:71.7px"></div>
<svg class="an" style="left:425px;top:417px" width="90" height="90" viewBox="0 0 599 599"><defs><pattern id="wool" width="14" height="14" patternUnits="userSpaceOnUse"><rect width="14" height="14" fill="#eddcce"/><circle cx="3" cy="4" r="2.2" fill="#d9b9a2"/><circle cx="10" cy="10" r="2" fill="#dcbfa8"/></pattern></defs>
<g stroke="none">
<path d="M478,345 L500,420 L486,498 L512,500 L522,420 L512,345 Z" fill="#e0b49a"/>
<path d="M428,345 L440,420 L418,470 L446,472 L462,420 L462,345 Z" fill="#e6bea4"/>
<path d="M188,355 L200,430 L194,480 L216,480 L222,430 L226,355 Z" fill="#e4baa0"/>
<path d="M234,365 L240,440 L244,500 L266,500 L266,440 L266,365 Z" fill="#eac4aa"/>
<path d="M100,200 C110,160 150,140 200,160 C280,165 380,150 480,165 C540,180 562,240 547,290 C532,330 512,350 472,360 L422,355 C352,365 282,370 222,370 L180,350 C140,330 110,280 100,230 Z" fill="url(#wool)"/>
<path d="M100,200 C110,160 150,140 200,160 C280,165 380,150 480,165 C540,180 562,240 547,290 C532,330 512,350 472,360 L422,355 C352,365 282,370 222,370 L180,350 C140,330 110,280 100,230 Z" fill="none" stroke="#d8b49c" stroke-width="6"/>
<path d="M60,150 C62,125 75,105 88,92 L80,82 L102,92 C122,96 150,100 170,105 L192,96 L188,120 C182,150 172,182 162,202 C142,218 110,218 90,202 C75,190 62,175 60,150 Z" fill="#e6b090"/>
<ellipse cx="70" cy="168" rx="10" ry="14" fill="#a8604c"/>
<ellipse cx="205" cy="480" rx="13" ry="5" fill="#6a4a3a"/>
<ellipse cx="254" cy="500" rx="13" ry="5" fill="#6a4a3a"/>
<ellipse cx="430" cy="472" rx="13" ry="5" fill="#6a4a3a"/>
<ellipse cx="496" cy="500" rx="13" ry="5" fill="#6a4a3a"/>
</g>
</svg>
<div class="cap" style="left:422.3px;top:507.8px">sheep</div>
<div class="fr" style="left:528.4px;top:420.2px;width:78.6px;height:83.1px"></div>
<svg class="an" style="left:523px;top:417px" width="90" height="90" viewBox="0 0 599 599"><defs><pattern id="tstr" width="12" height="12" patternUnits="userSpaceOnUse" patternTransform="rotate(25)"><rect width="12" height="12" fill="#c4c0e2"/><rect y="0" width="12" height="4" fill="#8e88c0"/></pattern></defs>
<g stroke="none">
<path d="M270,112 C280,72 330,40 392,38 C452,44 512,90 527,160 C532,220 512,262 472,282 L412,292 L362,262 L302,202 Z" fill="#86844e"/>
<path d="M300,130 C340,100 410,100 450,140 C480,180 470,230 430,260 L400,270 C420,230 420,180 390,150 C360,130 320,130 300,130 Z" fill="#a09c62"/>
<path d="M300,122 C350,105 410,110 440,150 C460,190 450,240 410,270" stroke="#e8e0c0" stroke-width="6" fill="none"/>
<path d="M138,378 C200,410 282,420 330,400 L362,330 C396,380 422,440 434,504 C382,497 322,477 282,457 C222,442 168,414 138,378 Z" fill="url(#tstr)"/>
<path d="M236,420 L236,490 L168,520 L176,532 L232,522 L272,502 L288,490 L262,420 Z" fill="#e8a346"/>
<path d="M55,290 C50,240 90,210 130,200 L150,160 C180,130 262,130 312,140 C352,150 392,170 402,220 C407,260 392,282 382,300 L372,365 C352,400 322,412 282,410 L230,402 C150,392 60,352 55,290 Z" fill="#1f5634"/>
<path d="M330,290 C350,320 370,360 385,400 L360,395 C345,360 335,330 330,290 Z" fill="#1a4a2c"/>
<path d="M90,280 C100,240 150,230 200,230 C260,230 310,250 330,290 C340,340 310,365 260,372 C200,377 140,355 100,325 Z" fill="#2a7044"/>
<path d="M180,160 C220,150 280,150 310,170 C330,200 320,230 290,240 C250,240 200,220 180,190 Z" fill="#2c7548"/>
<path d="M310,150 C340,160 380,180 390,230 C392,260 375,280 350,285 C330,250 320,200 310,150 Z" fill="#2f5c48"/>
<path d="M95,240 C100,190 130,140 162,130 C187,135 197,160 182,190 L142,230 C132,250 112,256 95,240 Z" fill="#e04444"/>
<path d="M150,150 C165,140 180,150 178,170 L160,180 Z" fill="#f0a0a0"/>
</g>
</svg>
<div class="cap" style="left:519.7px;top:507.8px">turkey</div>
</body></html>
